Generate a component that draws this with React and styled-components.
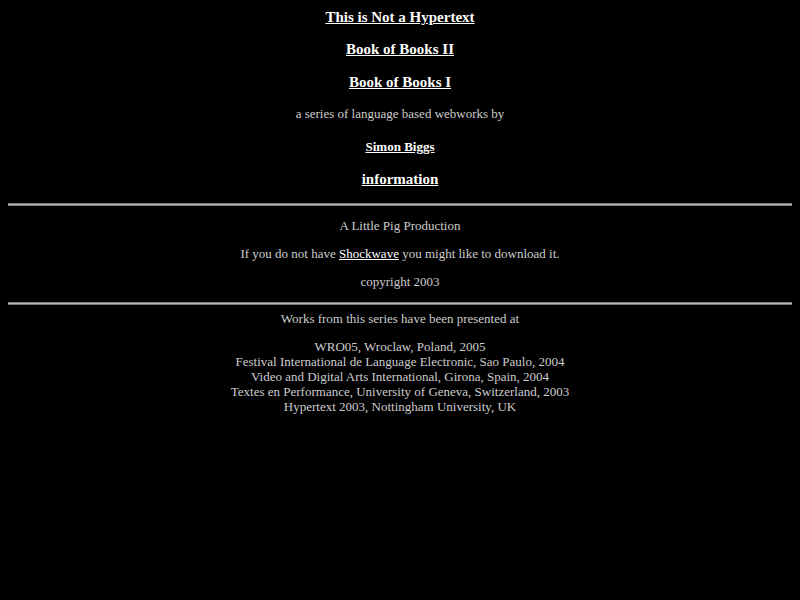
import React from "react";
import styled, { createGlobalStyle } from "styled-components";

const Global = createGlobalStyle`
  html, body { background: #000; }
  body {
    margin: 0;
    padding: 8px;
    font-family: "Liberation Serif", "Times New Roman", serif;
    color: #cccccc;
  }
`;

const Page = styled.div`
  display: flex;
  flex-direction: column;
  align-items: stretch;
  text-align: center;
`;

const Section = styled.div`
  display: flex;
  flex-direction: column;
  align-items: center;
  gap: ${(p) => p.$gap}px;
  padding-top: ${(p) => p.$top || 0}px;
  padding-bottom: ${(p) => p.$bottom || 0}px;
`;

const Row = styled.div`
  font-size: ${(p) => p.$size}px;
  line-height: ${(p) => p.$lh}px;
  font-weight: ${(p) => (p.$bold ? 700 : 400)};
  color: #cccccc;
`;

const Link = styled.a`
  color: #ffffff;
  text-decoration: underline;
`;

const Rule = styled.hr`
  margin: 0;
  height: 1px;
  border: none;
  border-top: 1px solid #7a7a7a;
  border-bottom: 1px solid #7a7a7a;
  background: #b8b8b8;
`;

const List = styled.div`
  font-size: 13px;
  line-height: 15px;
  color: #cccccc;
  margin-top: 12px;
`;

const Line = styled.div``;

export default function App() {
  return (
    <>
      <Global />
      <Page>
        <Section $gap={14.4} $bottom={15}>
          <Row $size={15} $lh={18} $bold>
            <Link href="#">This is Not a Hypertext</Link>
          </Row>
          <Row $size={15} $lh={18} $bold>
            <Link href="#">Book of Books II</Link>
          </Row>
          <Row $size={15} $lh={18} $bold>
            <Link href="#">Book of Books I</Link>
          </Row>
          <Row $size={13} $lh={18}>
            a series of language based webworks by
          </Row>
          <Row $size={13} $lh={18} $bold>
            <Link href="#">Simon Biggs</Link>
          </Row>
          <Row $size={15} $lh={18} $bold>
            <Link href="#">information</Link>
          </Row>
        </Section>
        <Rule />
        <Section $gap={10} $top={11} $bottom={11}>
          <Row $size={13} $lh={18}>A Little Pig Production</Row>
          <Row $size={13} $lh={18}>
            If you do not have <Link href="#">Shockwave</Link> you might like to download it.
          </Row>
          <Row $size={13} $lh={18}>copyright 2003</Row>
        </Section>
        <Rule />
        <Section $gap={0} $top={5}>
          <Row $size={13} $lh={17}>Works from this series have been presented at</Row>
          <List>
            <Line>WRO05, Wroclaw, Poland, 2005</Line>
            <Line>Festival International de Language Electronic, Sao Paulo, 2004</Line>
            <Line>Video and Digital Arts International, Girona, Spain, 2004</Line>
            <Line>Textes en Performance, University of Geneva, Switzerland, 2003</Line>
            <Line>Hypertext 2003, Nottingham University, UK</Line>
          </List>
        </Section>
      </Page>
    </>
  );
}
